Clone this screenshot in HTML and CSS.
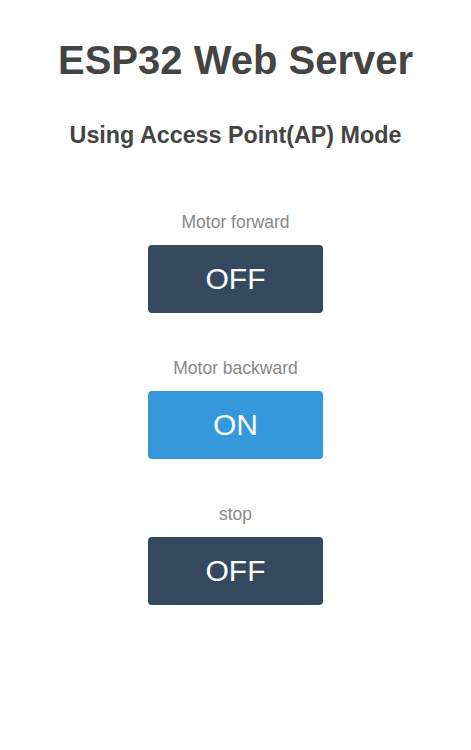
FILE: index.html
```html
<!DOCTYPE html>
<html>
<head>
<meta charset="utf-8">
<title>ESP32 Web Server</title>
<link rel="stylesheet" href="styles.css">
</head>
<body>
<main class="page">
  <h1 class="title">ESP32 Web Server</h1>
  <h3 class="subtitle">Using Access Point(AP) Mode</h3>
  <section class="controls">
    <div class="control">
      <p class="label">Motor forward</p>
      <a class="button button-off" href="#">OFF</a>
    </div>
    <div class="control">
      <p class="label">Motor backward</p>
      <a class="button button-on" href="#">ON</a>
    </div>
    <div class="control">
      <p class="label">stop</p>
      <a class="button button-off" href="#">OFF</a>
    </div>
  </section>
</main>
</body>
</html>
```
FILE: styles.css
```css
html, body {
  margin: 0;
  padding: 0;
  background: #ffffff;
}
.page {
  font-family: "Liberation Sans", Arial, Helvetica, sans-serif;
  text-align: center;
  display: flex;
  flex-direction: column;
  align-items: center;
  padding-top: 37px;
}
.title {
  margin: 0;
  font-size: 40px;
  line-height: 46px;
  font-weight: bold;
  color: #444444;
}
.subtitle {
  margin: 39px 0 0;
  font-size: 23.3px;
  line-height: 26px;
  font-weight: bold;
  color: #444444;
}
.controls {
  display: flex;
  flex-direction: column;
  align-items: center;
  gap: 45px;
  margin-top: 64px;
}
.control {
  display: flex;
  flex-direction: column;
  align-items: center;
  gap: 13px;
}
.label {
  margin: 0;
  font-size: 17.5px;
  line-height: 20px;
  color: #888888;
}
.button {
  display: flex;
  align-items: center;
  justify-content: center;
  width: 175px;
  height: 68px;
  border-radius: 4px;
  color: #ffffff;
  font-size: 30px;
  text-decoration: none;
}
.button-on {
  background-color: #3498db;
}
.button-off {
  background-color: #34495e;
}
```
